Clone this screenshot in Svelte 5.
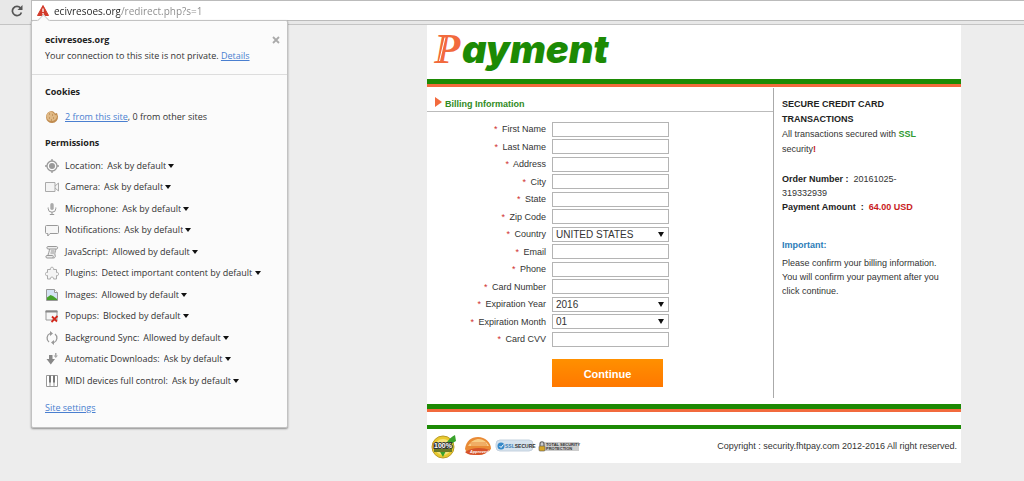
<script lang="ts">
	type Permission = { id: string; label: string; value: string };

	const permissions: Permission[] = [
		{ id: 'location', label: 'Location', value: 'Ask by default' },
		{ id: 'camera', label: 'Camera', value: 'Ask by default' },
		{ id: 'microphone', label: 'Microphone', value: 'Ask by default' },
		{ id: 'notifications', label: 'Notifications', value: 'Ask by default' },
		{ id: 'javascript', label: 'JavaScript', value: 'Allowed by default' },
		{ id: 'plugins', label: 'Plugins', value: 'Detect important content by default' },
		{ id: 'images', label: 'Images', value: 'Allowed by default' },
		{ id: 'popups', label: 'Popups', value: 'Blocked by default' },
		{ id: 'sync', label: 'Background Sync', value: 'Allowed by default' },
		{ id: 'downloads', label: 'Automatic Downloads', value: 'Ask by default' },
		{ id: 'midi', label: 'MIDI devices full control', value: 'Ask by default' }
	];

	const fields: { id: string; label: string; option?: string }[] = [
		{ id: 'first-name', label: 'First Name' },
		{ id: 'last-name', label: 'Last Name' },
		{ id: 'address', label: 'Address' },
		{ id: 'city', label: 'City' },
		{ id: 'state', label: 'State' },
		{ id: 'zip', label: 'Zip Code' },
		{ id: 'country', label: 'Country', option: 'UNITED STATES' },
		{ id: 'email', label: 'Email' },
		{ id: 'phone', label: 'Phone' },
		{ id: 'card-number', label: 'Card Number' },
		{ id: 'exp-year', label: 'Expiration Year', option: '2016' },
		{ id: 'exp-month', label: 'Expiration Month', option: '01' },
		{ id: 'cvv', label: 'Card CVV' }
	];

	let url = $state('ecivresoes.org/redirect.php?s=1');
	let popupOpen = $state(true);
</script>

{#snippet icon(id: string)}
	<svg class="icon" viewBox="0 0 14 14" aria-hidden="true">
		{#if id === 'location'}
			<circle cx="7" cy="7" r="5" fill="none" stroke="#999" stroke-width="1.3" />
			<circle cx="7" cy="7" r="3" fill="#999" />
			<path d="M7 0v2M7 12v2M0 7h2M12 7h2" stroke="#999" stroke-width="1.3" />
		{:else if id === 'camera'}
			<path d="M.5 2.5h9.5v9H.5zM10 6l3.5-3v8L10 8" fill="#f4f4f4" stroke="#aaa" />
		{:else if id === 'microphone'}
			<rect x="5.3" y="1" width="3.4" height="7" rx="1.7" fill="#aaa" />
			<path d="M3.2 5.5v1.2a3.8 3.5 0 0 0 7.6 0V5.5M7 10v2.5M4.8 12.5h4.4" fill="none" stroke="#999" />
		{:else if id === 'notifications'}
			<path d="M1.5 2.5h11a1 1 0 0 1 1 1v6a1 1 0 0 1-1 1H5L2.8 13v-2.5H1.5a1 1 0 0 1-1-1v-6a1 1 0 0 1 1-1z" fill="#f6f6f6" stroke="#999" />
		{:else if id === 'javascript'}
			<path d="M3 1.5h8.5c1.5 0 1.5 2.5 0 2.5H11c-.5 2-1.5 4-1 6 1 2-.5 3-1.5 3H2C.5 13 .5 10.5 2 10.5h1c0-2 1.5-4 1.5-6.5H3C1.5 4 1.5 1.5 3 1.5z" fill="#ededed" stroke="#999" />
			<path d="M4.5 4H11M6 6h3.5M5.5 8H9M3 10.5h4.5c1 0 1 1.8 0 2.5" fill="none" stroke="#999" />
		{:else if id === 'plugins'}
			<path d="M2.5 3.5h3c-1-3 4-3 3 0h3v3c2.8-1 2.8 4 0 3v3.5H8.5c1-2.5-4-2.5-3 0h-3V9.5c-3 1-3-4 0-3z" fill="#f4f4f4" stroke="#aaa" />
		{:else if id === 'images'}
			<path d="M1.5 1.5h8l3 3v8h-11z" fill="#d5e3f4" stroke="#999" />
			<path d="M9.5 1.5v3h3" fill="#fff" stroke="#999" />
			<path d="M2 12V9.5L5.5 7l2.5 1 4 3v1z" fill="#46a22b" />
		{:else if id === 'popups'}
			<path d="M1 2h11v9H1z" fill="#f7f7f7" stroke="#999" />
			<path d="M.5 2.5h12" stroke="#888" stroke-width="2" />
			<path d="M7 7.5l5 5M12.5 7l-6 6" stroke="#d3281c" stroke-width="1.8" />
		{:else if id === 'sync'}
			<path d="M5 2.5A5 5 0 0 0 4 11M9 11.5A5 5 0 0 0 10 3" fill="none" stroke="#999" stroke-width="1.3" />
			<path d="M5 0l3 2.5L5 5zM9 9v5l-3-2.5z" fill="#999" />
		{:else if id === 'downloads'}
			<path d="M4 3h3.5v4H10l-4.2 5.5L1.5 7H4z" fill="#888" />
			<path d="M10 1h1.5v2.5H13L10.8 6 8.5 3.5H10z" fill="#aaa" />
		{:else}
			<path d="M1.5 1.5h11v11h-11z" fill="#fff" stroke="#999" />
			<path d="M5 8v4.5M9 8v4.5" stroke="#999" />
			<path d="M5 1.5v7M9 1.5v7" stroke="#777" stroke-width="2" />
		{/if}
	</svg>
{/snippet}

<div class="browser">
	<header class="toolbar">
		<button class="reload" aria-label="Reload">
			<svg viewBox="0 0 12 12" width="12" height="12">
				<path d="M9.5 3A4.6 4.6 0 1 0 10.4 7.5" fill="none" stroke="#555" stroke-width="1.7" />
				<path d="M11.5 0v5h-5z" fill="#555" />
			</svg>
		</button>
		<div class="omnibox">
			<svg viewBox="0 0 12 11" width="12" height="11" aria-hidden="true">
				<path d="M6 .5l5.5 10H.5z" fill="#d23a2a" stroke="#d23a2a" stroke-linejoin="round" />
				<path d="M6 3.5v3.5M6 8v1.5" stroke="#fff" stroke-width="1.3" />
			</svg>
			<input aria-label="Address bar" bind:value={url} spellcheck="false" />
		</div>
	</header>

	{#if popupOpen}
		<section class="popup" aria-label="Site information">
			<div class="site">
				<h2>ecivresoes.org</h2>
				<button class="close" aria-label="Close" onclick={() => (popupOpen = false)}>
					<svg viewBox="0 0 8 8" width="8" height="8">
						<path d="M1 1l6 6M7 1L1 7" stroke="#aaa" stroke-width="1.8" />
					</svg>
				</button>
				<p>Your connection to this site is not private. <a href="#details">Details</a></p>
			</div>
			<h3>Cookies</h3>
			<p class="cookies">
				<svg class="icon" viewBox="0 0 14 14" aria-hidden="true">
					<path d="M7 1l2 1 1 1.5 2-.5 1 3.5A6 6 0 1 1 7 1z" fill="#c08c50" />
					<path d="M6.5 1.5l2 1.5 1.5 2 2 .5c0 4-3 5.5-5.5 5.5-3 0-5-2-5-4.5s2-5 5-5z" fill="#e0b985" />
					<path d="M4 4h1M7 5h1M4 8h1M8 8h1M6 10h1" stroke="#a9763f" />
				</svg>
				<span><a href="#cookies">2 from this site</a>, 0 from other sites</span>
			</p>
			<h3 class="perm-title">Permissions</h3>
			<ul>
				{#each permissions as p (p.id)}
					<li>
						{@render icon(p.id)}
						<label for={p.id}>{p.label}:</label>
						<select id={p.id}>
							<option>{p.value}</option>
						</select>
						<span class="caret"></span>
					</li>
				{/each}
			</ul>
			<a class="settings" href="#settings">Site settings</a>
		</section>
	{/if}

	<main>
		<div class="logo">
			<svg viewBox="0 0 190 46" width="190" height="46" role="img" aria-label="Payment">
				<text class="logo-p" x="7" y="38">P</text>
				<path d="M18 12.5L12.5 36" stroke="#fff" stroke-width="1" />
				<text class="logo-rest" x="35" y="38">ayment</text>
			</svg>
		</div>
		<div class="stripes"></div>
		<div class="columns">
			<form onsubmit={(e) => e.preventDefault()}>
				<h1>
					<svg viewBox="0 0 7 10" width="7" height="10" aria-hidden="true"><path d="M0 0l7 5-7 5z" fill="#f26a3d" /></svg>
					Billing Information
				</h1>
				<div class="fields">
					{#each fields as f (f.id)}
						<label for={f.id}><span class="star">*</span> {f.label}</label>
						{#if f.option}
							<span class="drop">
								<select id={f.id}>
									<option>{f.option}</option>
								</select>
							</span>
						{:else}
							<input id={f.id} type="text" />
						{/if}
					{/each}
				</div>
				<button class="continue">Continue</button>
			</form>
			<aside>
				<p class="secure">
					<strong>SECURE CREDIT CARD TRANSACTIONS</strong><br />
					All transactions secured with <b class="ssl">SSL</b> security<b class="bang">!</b>
				</p>
				<p class="order">
					<strong>Order Number :</strong>&nbsp; <span>20161025-</span><br />
					<span>319332939</span><br />
					<strong>Payment Amount &nbsp;:&nbsp; <span class="amount">64.00 USD</span></strong>
				</p>
				<h2>Important:</h2>
				<p>Please confirm your billing information. You will confirm your payment after you click continue.</p>
			</aside>
		</div>
		<div class="stripes"></div>
		<footer>
			<svg viewBox="0 0 152 26" width="152" height="26" role="img" aria-label="Security seals">
				<circle cx="12" cy="14" r="11" fill="#e9c92e" stroke="#b99b28" />
				<circle cx="12" cy="14" r="8" fill="#f4e27a" />
				<path d="M8 17l4 7c3-7 7-13 13-16l-1-6c-6 3-10 9-12 15z" fill="#39a22c" />
				<path d="M3 16h18v3H3z" fill="#6b7a26" />
				<text x="3" y="15" class="seal-100">100%</text>
				<path d="M34 16C35 8 40 4 47 4s13 5 13 12c-4 4-8 6-13 6-6 0-10-1-12-4z" fill="#e98a35" />
				<path d="M37 13c3-5 7-7 11-7s8 3 10 7z" fill="#f8cd85" />
				<path d="M38 10h17M40 12h16" stroke="#e88d45" />
				<path d="M34 19c7-5 17-5 25-2-4 4-8 5-13 5-5 0-9 0-12-3z" fill="#d6532a" />
				<text x="39" y="20" class="seal-red">Approved</text>
				<rect x="65" y="7" width="37" height="11" rx="4" fill="#d5e2ee" stroke="#c5d2df" />
				<circle cx="70" cy="13" r="3.5" fill="#3689c9" />
				<path d="M68.5 13l1.5 1.5 2.5-3" fill="none" stroke="#fff" />
				<text x="74" y="15" class="seal-ssl"><tspan fill="#367db5">SSL</tspan>SECURE</text>
				<path d="M109 9h39v9h-39z" fill="#ccc" />
				<rect x="108" y="13" width="6" height="5" rx="1" fill="#d6a628" stroke="#555" stroke-width=".6" />
				<path d="M109 13v-2c0-3 4-3 4 0v2" fill="none" stroke="#666" stroke-width="1.2" />
				<text x="115" y="13" class="seal-total">TOTAL SECURITY</text>
				<text x="115" y="17" class="seal-total">PROTECTION</text>
			</svg>
			<span>Copyright : security.fhtpay.com 2012-2016 All right reserved.</span>
		</footer>
	</main>
</div>

<style>
	:global(body) {
		background: #ededed;
	}

	.browser {
		position: relative;
		font: 9px/14px "Liberation Sans", Arial, sans-serif;
		color: #333;
		min-height: 100vh;
	}

	h1, h2, h3, p, ul {
		margin: 0;
		padding: 0;
	}

	input, select, button {
		box-sizing: border-box;
		margin: 0;
		font: inherit;
		color: inherit;
	}

	a {
		color: #4a7fd0;
	}

	/* browser chrome */
	.toolbar {
		display: flex;
		height: 24px;
		border-bottom: 1px solid #c4c4c4;
		background: #e8e8e8;
	}

	.reload {
		display: flex;
		width: 31px;
		height: 21px;
		padding: 0 8px 0 11px;
		align-items: center;
		border: 0;
		background: none;
	}

	.omnibox {
		box-sizing: border-box;
		display: flex;
		flex: 1;
		gap: 5px;
		align-items: center;
		height: 21px;
		padding-left: 5px;
		border: 1px solid #bbb;
		border-right: 0;
		background: #fff;
	}

	/* host in dark, path in grey */
	.omnibox input {
		flex: 1;
		padding: 0;
		border: 0;
		outline: 0;
		font: 10px/16px "Open Sans", "Noto Sans", sans-serif;
		color: transparent;
		background: linear-gradient(to right, #222 66px, #888 66px);
		background-clip: text;
	}

	.popup {
		position: absolute;
		top: 20px;
		left: 31px;
		z-index: 1;
		box-sizing: border-box;
		width: 257px;
		padding-bottom: 11px;
		border: 1px solid #c2c2c2;
		border-radius: 2px;
		background: #fbfbfb;
		box-shadow: 0 1px 2px rgba(0, 0, 0, 0.4);
		font: 9px/16px "Open Sans", "Noto Sans", sans-serif;
	}

	.popup::before {
		content: "";
		position: absolute;
		top: -5px;
		left: 7px;
		width: 8px;
		height: 8px;
		border: 1px solid #ccc;
		border-right: 0;
		border-bottom: 0;
		background: #fbfbfb;
		transform: rotate(45deg);
	}

	.site {
		display: grid;
		grid-template-columns: 1fr auto;
		padding: 11px 3px 10px 13px;
		border-bottom: 1px solid #ddd;
	}

	.site p {
		grid-column: 1 / -1;
	}

	.popup h2, .popup h3 {
		font-size: 9px;
		line-height: 16px;
		color: #222;
	}

	.popup h3 {
		margin: 9px 13px;
	}

	.close {
		display: flex;
		padding: 4px;
		border: 0;
		background: none;
	}

	.cookies {
		display: flex;
		gap: 6px;
		align-items: center;
		margin: 0 13px;
	}

	.popup .perm-title {
		margin: 10px 13px 4px;
	}

	.icon {
		width: 14px;
		height: 14px;
		flex: none;
	}

	ul {
		display: grid;
		grid-auto-rows: 21px 22px;
		margin: 0 13px;
		list-style: none;
	}

	li {
		display: flex;
		align-items: center;
	}

	li label {
		margin: 0 4px 0 6px;
	}

	li select {
		appearance: none;
		padding: 0;
		border: 0;
		background: none;
	}

	.caret {
		margin-left: 2px;
		border: 3px solid transparent;
		border-top: 4px solid #111;
		border-bottom: 0;
	}

	.settings {
		display: inline-block;
		margin: 9px 13px 0;
	}

	/* payment page */
	main {
		margin: 0 63px 0 427px;
		background: #fff;
	}

	.logo {
		height: 54px;
	}

	.logo svg {
		display: block;
	}

	.logo-p {
		font: italic bold 43px "Liberation Serif", serif;
		fill: #f26a3d;
	}

	.logo-rest {
		font: italic 900 38px Inter, "Liberation Sans", sans-serif;
		fill: #1c8a04;
	}

	.stripes {
		height: 5px;
		border-bottom: 3px solid #f26a3d;
		background: #1c8a04;
	}

	.columns {
		display: grid;
		grid-template-columns: 1fr 188px;
		padding: 1px 0 6px;
	}

	form {
		padding-bottom: 11px;
	}

	h1 {
		display: flex;
		gap: 3px;
		margin-bottom: 8px;
		padding: 9px 0 0 8px;
		border-bottom: 1px solid #bbb;
		font-size: 9px;
		line-height: 14px;
		color: #2f8a22;
	}

	.fields {
		display: grid;
		grid-template-columns: 119px 117px;
		grid-auto-rows: 18px 17px;
		column-gap: 6px;
		align-items: center;
	}

	.fields label {
		text-align: right;
	}

	.star {
		margin-right: 2px;
		color: #d03030;
	}

	.fields input, .fields select {
		display: block;
		width: 100%;
		height: 15px;
		padding: 0 3px;
		border: 1px solid #b4b4b4;
		border-radius: 0;
		background: #fff;
	}

	.drop {
		position: relative;
	}

	.fields select {
		appearance: none;
		font-size: 10px;
		line-height: 13px;
	}

	.drop::after {
		content: "";
		position: absolute;
		top: 5px;
		right: 5px;
		border: 3px solid transparent;
		border-top: 5px solid #111;
		border-bottom: 0;
		pointer-events: none;
	}

	.continue {
		display: block;
		width: 111px;
		height: 28px;
		margin: 11px 0 0 125px;
		border: 0;
		background: linear-gradient(#ff9000, #ff7800);
		font: bold 11px/28px "Liberation Sans", Arial, sans-serif;
		color: #fff;
	}

	aside {
		padding: 9px 14px 0 8px;
		border-left: 1px solid #aaa;
	}

	aside strong {
		color: #222;
	}

	.secure {
		line-height: 15px;
	}

	.order {
		margin: 15px 0 24px;
	}

	.ssl {
		color: #2f9a32;
	}

	.bang, aside .amount {
		color: #c8201c;
	}

	aside h2 {
		margin-bottom: 4px;
		font-size: 9px;
		line-height: 14px;
		color: #2b7cb8;
	}

	footer {
		display: flex;
		align-items: center;
		justify-content: space-between;
		height: 34px;
		margin-top: 13px;
		padding: 0 4px;
		border-top: 4px solid #1c8a04;
	}

	.seal-100 {
		font: bold 7px "Liberation Sans", sans-serif;
		fill: #fff;
		stroke: #333;
		stroke-width: 2px;
		paint-order: stroke;
	}

	.seal-red {
		font: italic bold 4px "Liberation Sans", sans-serif;
		fill: #fff;
	}

	.seal-ssl {
		font: bold 5px "Liberation Sans", sans-serif;
		fill: #333;
	}

	.seal-total {
		font: bold 4px "Liberation Sans", sans-serif;
		fill: #333;
	}
</style>
